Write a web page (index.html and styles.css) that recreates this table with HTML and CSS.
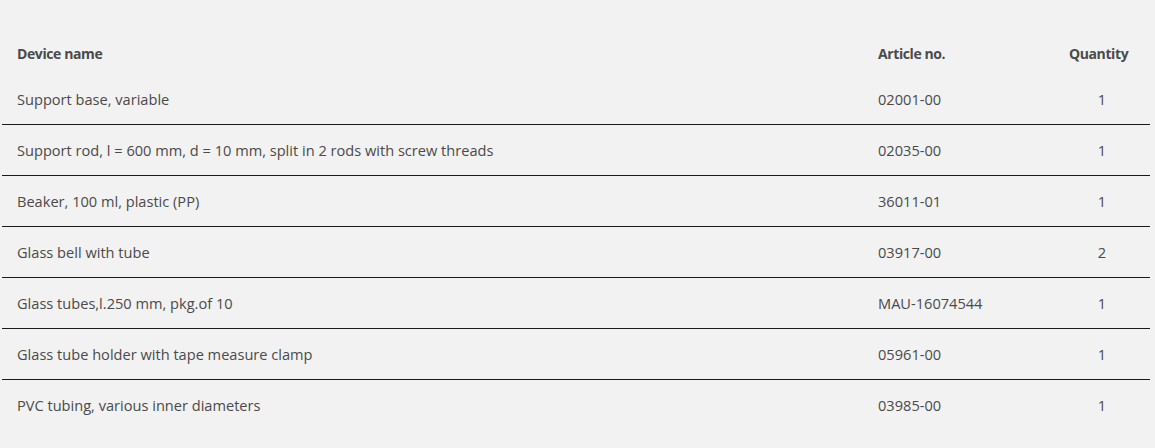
FILE: index.html
```html
<!DOCTYPE html>
<html>
<head>
<meta charset="utf-8">
<link rel="stylesheet" href="styles.css">
</head>
<body>
<div class="wrap">
<table class="parts">
<thead>
<tr><th class="c-name">Device name</th><th class="c-art">Article no.</th><th class="c-qty">Quantity</th></tr>
</thead>
<tbody>
<tr><td>Support base, variable</td><td>02001-00</td><td class="qty">1</td></tr>
<tr><td>Support rod, l = 600 mm, d = 10 mm, split in 2 rods with screw threads</td><td>02035-00</td><td class="qty">1</td></tr>
<tr><td>Beaker, 100 ml, plastic (PP)</td><td>36011-01</td><td class="qty">1</td></tr>
<tr><td>Glass bell with tube</td><td>03917-00</td><td class="qty">2</td></tr>
<tr><td>Glass tubes,l.250 mm, pkg.of 10</td><td>MAU-16074544</td><td class="qty">1</td></tr>
<tr><td>Glass tube holder with tape measure clamp</td><td>05961-00</td><td class="qty">1</td></tr>
<tr><td>PVC tubing, various inner diameters</td><td>03985-00</td><td class="qty">1</td></tr>
</tbody>
</table>
</div>
</body>
</html>
```

FILE: styles.css
```css
html, body {
  margin: 0;
  padding: 0;
  background: #f2f2f2;
}
body {
  font-family: "Open Sans", "Noto Sans", sans-serif;
  font-size: 14.6px;
  color: #4a4a4a;
}
.wrap {
  padding: 32px 5px 0 2px;
}
.parts {
  width: 1148px;
  border-collapse: collapse;
  table-layout: fixed;
}
.parts th,
.parts td {
  box-sizing: border-box;
}
.c-name { width: 861px; }
.c-art { width: 191px; }
.c-qty { width: 96px; }
.parts th {
  text-align: left;
  font-size: 14px;
  letter-spacing: -0.4px;
  font-weight: 700;
  height: 42px;
  padding: 0 15px;
  vertical-align: middle;
  white-space: nowrap;
}
.parts td {
  height: 51px;
  padding: 0 15px;
  vertical-align: middle;
}
.parts tbody tr:first-child td {
  height: 50px;
}
.parts tbody tr + tr td {
  border-top: 1px solid #1a1a1a;
}
.parts td.qty {
  text-align: center;
  padding: 0;
}
```
